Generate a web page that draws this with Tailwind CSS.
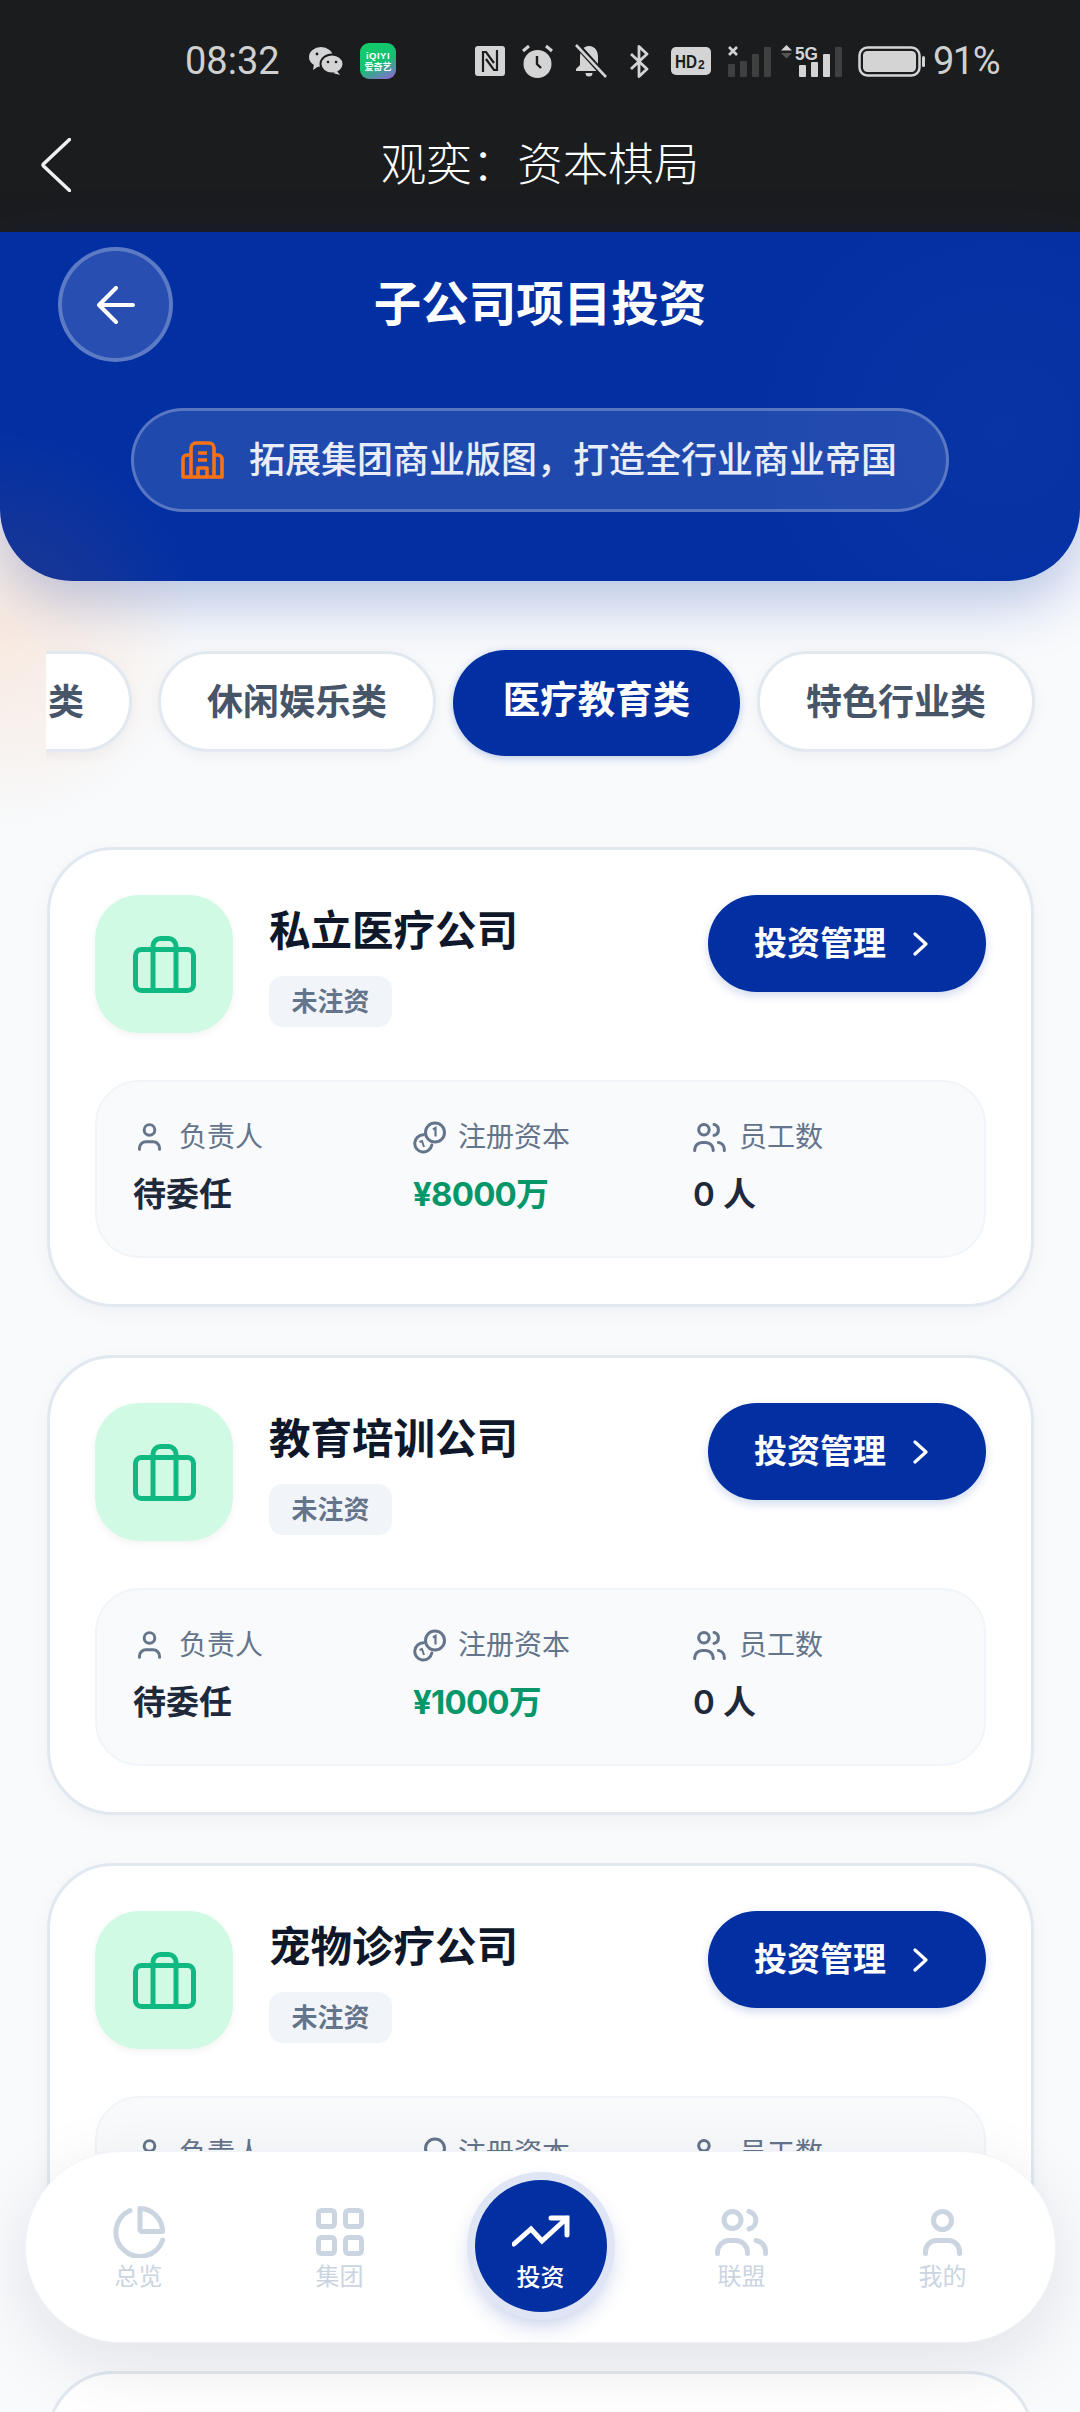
<!DOCTYPE html>
<html lang="zh-CN">
<head>
<meta charset="utf-8">
<title>子公司项目投资</title>
<script src="https://cdn.jsdelivr.net/npm/@tailwindcss/browser@4"></script>
</head>
<body class="m-0">
<div class="relative w-[1080px] h-[2412px] overflow-hidden bg-[#f8fafc] font-['Inter','Noto_Sans_CJK_SC',sans-serif]">

  <!-- system bars -->
  <div class="h-[232px] bg-[#1b1c1e] relative">
    <div class="h-[122px] flex items-center pl-[185px] text-[#d0d0d0]">
      <span class="w-[93px] text-[38px] leading-none font-['Roboto',sans-serif] font-normal">08:32</span>
      <svg class="ml-[31px]" width="34" height="28" viewBox="0 0 34 28"><ellipse cx="12" cy="10" rx="12" ry="10" fill="#d4d4d4"/><path d="M5 17l-1 6 6-4z" fill="#d4d4d4"/><ellipse cx="23" cy="17" rx="11.500" ry="9.500" fill="#d4d4d4" stroke="#1b1c1e" stroke-width="2"/><path d="M28 24l3 4-7-2z" fill="#d4d4d4"/><circle cx="8" cy="7" r="1.400" fill="#1b1c1e"/><circle cx="19" cy="15" r="1.300" fill="#1b1c1e"/><circle cx="27" cy="15" r="1.300" fill="#1b1c1e"/></svg>
      <div class="ml-[17px] w-[36px] h-[36px] rounded-[9px] bg-[linear-gradient(155deg,#10cf68_0%,#16bf72_55%,#9a5fe0_100%)] flex flex-col items-center justify-center text-white leading-none">
        <span class="text-[9.500px] font-bold leading-[11px] tracking-[0.5px] font-['Liberation_Sans',sans-serif]">iQIYI</span>
        <span class="text-[9px] font-bold leading-[11px]">爱奇艺</span>
      </div>
      <svg class="ml-[79px]" width="30" height="30" viewBox="0 0 30 30"><rect width="30" height="30" rx="3" fill="#d4d4d4"/><path d="M8 26V6h3l8 11M22 4v20h-3l-8-11" fill="none" stroke="#1b1c1e" stroke-width="2.200"/></svg>
      <svg class="ml-[17px]" width="31" height="34" viewBox="0 0 31 34"><path d="M1 7l6-5M24 2l6 5" stroke="#d4d4d4" stroke-width="3" fill="none"/><circle cx="15.500" cy="20" r="14" fill="#d4d4d4"/><path d="M15 12v8l4 4" stroke="#1b1c1e" stroke-width="2.400" fill="none"/></svg>
      <svg class="ml-[21px]" width="33" height="34" viewBox="0 0 33 34"><path d="M15 2c-6 0-9 5-9 11v8l-4 4v2h26v-2l-4-4v-8c0-6-3-11-9-11z" fill="#d4d4d4"/><path d="M11.500 29a3.500 3.500 0 0 0 7 0z" fill="#d4d4d4"/><path d="M2 0l30 33" stroke="#1b1c1e" stroke-width="6"/><path d="M2 1l30 32" stroke="#d4d4d4" stroke-width="2.600"/></svg>
      <svg class="ml-[22px]" width="21" height="33" viewBox="0 0 21 33"><path d="M2 9l16 15-8 7.500V1.500l8 7.500L2 24" fill="none" stroke="#d4d4d4" stroke-width="2.800" stroke-linejoin="round"/></svg>
      <svg class="ml-[21px]" width="40" height="28" viewBox="0 0 40 28"><rect width="40" height="28" rx="5" fill="#d4d4d4"/><text x="4" y="21" font-family="Liberation Sans" font-weight="700" font-size="19" fill="#1b1c1e" textLength="22" lengthAdjust="spacingAndGlyphs">HD</text><text x="27" y="22" font-family="Liberation Sans" font-weight="700" font-size="12" fill="#1b1c1e">2</text></svg>
      <svg class="ml-[17px]" width="43" height="31" viewBox="0 0 43 31"><path d="M1 1l8 8M9 1l-8 8" stroke="#d4d4d4" stroke-width="2.600"/><rect y="18" width="7" height="13" rx="1" fill="#3f4040"/><rect x="12" y="15" width="7" height="16" rx="1" fill="#3f4040"/><rect x="24" y="8" width="7" height="23" rx="1" fill="#3f4040"/><rect x="36" y="1" width="7" height="30" rx="1" fill="#3f4040"/></svg>
      <svg class="ml-[10px]" width="61" height="32" viewBox="0 0 61 32"><path d="M0 5.500L5.500 0 11 5.500z" fill="#d4d4d4"/><path d="M0 8h11l-5.500 5.500z" fill="#555"/><text x="14" y="15" font-family="Liberation Sans" font-weight="700" font-size="18" fill="#d4d4d4" textLength="23" lengthAdjust="spacingAndGlyphs">5G</text><rect x="18" y="20" width="7" height="12" rx="1" fill="#d4d4d4"/><rect x="30" y="17" width="7" height="15" rx="1" fill="#d4d4d4"/><rect x="42" y="9" width="7" height="23" rx="1" fill="#d4d4d4"/><rect x="54" y="2" width="7" height="30" rx="1" fill="#3f4040"/></svg>
      <svg class="ml-[16px]" width="67" height="31" viewBox="0 0 67 31"><rect x="1.500" y="1.500" width="60" height="28" rx="8" fill="none" stroke="#d4d4d4" stroke-width="2.500"/><rect x="5" y="5" width="53" height="21" rx="4.500" fill="#d4d4d4"/><rect x="64" y="10" width="3" height="11" rx="1.500" fill="#d4d4d4"/></svg>
      <span class="ml-[8px] text-[38px] leading-none tracking-[-1.5px] font-['Roboto',sans-serif] font-normal">91%</span>
    </div>
    <div class="relative h-[86px] flex items-center justify-center">
      <svg class="absolute left-[41px] top-[16px]" width="30" height="54" viewBox="0 0 30 54"><path d="M28.500 1.500L2.500 26q-1 1 0 2l26 24.500" fill="none" stroke="#f0f0f0" stroke-width="3.500" stroke-linecap="round"/></svg>
      <span class="text-[45.500px] leading-none font-light text-white">观奕：资本棋局</span>
    </div>
  </div>

  <!-- blue header -->
  <div class="relative h-[349px] bg-[#0230a3] rounded-b-[72px] shadow-[0_20px_60px_rgba(2,48,163,0.28)] overflow-hidden">
    <div class="absolute right-[-180px] top-[-60px] w-[520px] h-[520px] rounded-full bg-[radial-gradient(circle,rgba(255,255,255,0.025)_0%,rgba(255,255,255,0)_70%)]"></div>
    <div class="relative flex items-center justify-between px-[58px] pt-[15px]">
      <div class="w-[115px] h-[115px] rounded-full bg-white/15 border-[4px] border-white/25 flex items-center justify-center">
        <svg width="38" height="38" viewBox="0 0 38 38"><path d="M36 19H3M19 2L2 19l17 17" fill="none" stroke="#fff" stroke-width="4" stroke-linecap="round" stroke-linejoin="round"/></svg>
      </div>
      <h1 class="mb-[2px] text-[47.500px] leading-none font-bold text-white">子公司项目投资</h1>
      <div class="w-[115px] h-[115px]"></div>
    </div>
    <div class="relative mt-[46px] mx-auto w-[818px] h-[104px] rounded-full bg-white/12 border-[3px] border-white/25 flex items-center pl-[47px]">
      <svg width="43" height="38" viewBox="0 0 43 38"><path d="M10 36V7a5 5 0 0 1 5-5h13a5 5 0 0 1 5 5v29M10 14H6a4 4 0 0 0-4 4v18h39V18a4 4 0 0 0-4-4h-4M17 12h9M17 19h9M17 36v-9h9v9" fill="none" stroke="#f97316" stroke-width="3.600" stroke-linejoin="round"/></svg>
      <span class="ml-[25px] text-[36px] leading-none font-medium text-white/90 whitespace-nowrap">拓展集团商业版图，打造全行业商业帝国</span>
    </div>
  </div>
  <div class="absolute left-[-200px] top-[430px] w-[400px] h-[400px] rounded-full bg-[radial-gradient(circle,rgba(249,115,22,0.12)_0%,rgba(249,115,22,0.06)_40%,rgba(249,115,22,0)_70%)]"></div>

  <!-- category tabs -->
  <div class="relative mt-[49px] ml-[46px] h-[150px] pt-[20px] overflow-hidden flex items-start font-bold">
    <div class="shrink-0 ml-[-190px] mt-px w-[276px] h-[101px] pr-[45px] rounded-full bg-white border-[3px] border-[#e2e8f0] shadow-[0_4px_14px_rgba(15,23,42,0.05)] flex items-center justify-end text-[36px] leading-none text-[#475569]">类</div>
    <div class="shrink-0 ml-[26px] mt-px w-[278px] h-[101px] rounded-full bg-white border-[3px] border-[#e2e8f0] shadow-[0_4px_14px_rgba(15,23,42,0.05)] flex items-center justify-center text-[36px] leading-none text-[#475569]">休闲娱乐类</div>
    <div class="shrink-0 ml-[17px] w-[287px] h-[106px] pb-[6px] rounded-full bg-[#0230a3] shadow-[0_2px_8px_rgba(2,48,163,0.25)] flex items-center justify-center text-[37.500px] leading-none text-white">医疗教育类</div>
    <div class="shrink-0 ml-[17px] mt-px w-[278px] h-[101px] rounded-full bg-white border-[3px] border-[#e2e8f0] shadow-[0_4px_14px_rgba(15,23,42,0.05)] flex items-center justify-center text-[36px] leading-none text-[#475569]">特色行业类</div>
  </div>

  <!-- cards -->
  <div class="relative mt-[67px] ml-[47px] w-[987px] flex flex-col gap-[48px]">

    <div class="h-[460px] rounded-[66px] bg-white border-[3px] border-[#e2e8f0] shadow-[0_6px_20px_rgba(15,23,42,0.04)] pt-[45px] px-[45px]">
      <div class="flex items-start">
        <div class="w-[138px] h-[138px] rounded-[44px] bg-[#d1fae5] shadow-[0_3px_8px_rgba(15,23,42,0.05)] flex items-center justify-center">
          <svg width="63" height="57" viewBox="0 0 63 57"><rect x="2.500" y="13.500" width="58" height="41" rx="6" fill="none" stroke="#10b981" stroke-width="5"/><path d="M20 54V10a7.500 7.500 0 0 1 7.500-7.500h8A7.500 7.500 0 0 1 43 10v44" fill="none" stroke="#10b981" stroke-width="5"/></svg>
        </div>
        <div class="ml-[36px] flex-1">
          <div class="h-[72px] text-[41.500px] leading-[72px] font-bold text-[#0f172a]">私立医疗公司</div>
          <div class="mt-[9px] w-[123px] h-[51px] rounded-[14px] bg-[#f1f5f9] flex items-center justify-center text-[26px] leading-none font-bold text-[#64748b]">未注资</div>
        </div>
        <div class="w-[278px] h-[97px] rounded-full bg-[#0230a3] shadow-[0_4px_10px_rgba(2,48,163,0.18)] flex items-center pl-[46px] text-white">
          <span class="text-[33px] leading-none font-bold">投资管理</span>
          <svg class="ml-[27px]" width="15" height="24" viewBox="0 0 15 24"><path d="M2 2l11 10L2 22" fill="none" stroke="#fff" stroke-width="3.200" stroke-linecap="round" stroke-linejoin="round"/></svg>
        </div>
      </div>
      <div class="mt-[47px] h-[178px] rounded-[44px] bg-[#f8fafc] border-[2px] border-[#f1f5f9] pl-[36px] pt-[35px] grid grid-cols-[280px_280px_1fr] content-start">
        <div>
          <div class="h-[40px] flex items-center text-[28px] leading-none text-[#64748b]">
            <span class="w-[33px] flex justify-center"><svg width="23" height="28" viewBox="0 0 39 47"><circle cx="19.500" cy="11.500" r="9" fill="none" stroke="#64748b" stroke-width="5"/><path d="M2.500 44.500v-2a11 11 0 0 1 11-11h12a11 11 0 0 1 11 11v2" fill="none" stroke="#64748b" stroke-width="5" stroke-linecap="round"/></svg></span>
            <span class="ml-[13px]">负责人</span>
          </div>
          <div class="mt-[13px] h-[48px] text-[33px] leading-[48px] font-bold text-[#1e293b]">待委任</div>
        </div>
        <div>
          <div class="h-[40px] flex items-center text-[28px] leading-none text-[#64748b]">
            <svg width="33" height="33" viewBox="0 0 33 33"><circle cx="22" cy="11.500" r="9.500" fill="none" stroke="#64748b" stroke-width="3"/><path d="M20 8.500l2.500-1.500v8.500" fill="none" stroke="#64748b" stroke-width="2.200"/><path d="M10.500 13.800A8.600 8.600 0 1 0 18.800 24" fill="none" stroke="#64748b" stroke-width="3" stroke-linecap="round"/><path d="M6.500 21l2.500-1 2 6" fill="none" stroke="#64748b" stroke-width="2"/></svg>
            <span class="ml-[12px]">注册资本</span>
          </div>
          <div class="mt-[13px] h-[48px] text-[33px] leading-[48px] font-bold tracking-[-0.8px] text-[#059669]">¥8000万</div>
        </div>
        <div>
          <div class="h-[40px] flex items-center text-[28px] leading-none text-[#64748b]">
            <svg width="33" height="29" viewBox="0 0 53 47"><circle cx="17.500" cy="11" r="8.500" fill="none" stroke="#64748b" stroke-width="5"/><path d="M34 2.500a9 9 0 0 1 0 17.500" fill="none" stroke="#64748b" stroke-width="5" stroke-linecap="round"/><path d="M2.500 44.500v-1a12 12 0 0 1 12-12h6a12 12 0 0 1 12 12v1M41 31.500a11 11 0 0 1 9.500 11v2" fill="none" stroke="#64748b" stroke-width="5" stroke-linecap="round"/></svg>
            <span class="ml-[13px]">员工数</span>
          </div>
          <div class="mt-[13px] h-[48px] text-[33px] leading-[48px] font-semibold text-[#1e293b]">0 人</div>
        </div>
      </div>
    </div>

    <div class="h-[460px] rounded-[66px] bg-white border-[3px] border-[#e2e8f0] shadow-[0_6px_20px_rgba(15,23,42,0.04)] pt-[45px] px-[45px]">
      <div class="flex items-start">
        <div class="w-[138px] h-[138px] rounded-[44px] bg-[#d1fae5] shadow-[0_3px_8px_rgba(15,23,42,0.05)] flex items-center justify-center">
          <svg width="63" height="57" viewBox="0 0 63 57"><rect x="2.500" y="13.500" width="58" height="41" rx="6" fill="none" stroke="#10b981" stroke-width="5"/><path d="M20 54V10a7.500 7.500 0 0 1 7.500-7.500h8A7.500 7.500 0 0 1 43 10v44" fill="none" stroke="#10b981" stroke-width="5"/></svg>
        </div>
        <div class="ml-[36px] flex-1">
          <div class="h-[72px] text-[41.500px] leading-[72px] font-bold text-[#0f172a]">教育培训公司</div>
          <div class="mt-[9px] w-[123px] h-[51px] rounded-[14px] bg-[#f1f5f9] flex items-center justify-center text-[26px] leading-none font-bold text-[#64748b]">未注资</div>
        </div>
        <div class="w-[278px] h-[97px] rounded-full bg-[#0230a3] shadow-[0_4px_10px_rgba(2,48,163,0.18)] flex items-center pl-[46px] text-white">
          <span class="text-[33px] leading-none font-bold">投资管理</span>
          <svg class="ml-[27px]" width="15" height="24" viewBox="0 0 15 24"><path d="M2 2l11 10L2 22" fill="none" stroke="#fff" stroke-width="3.200" stroke-linecap="round" stroke-linejoin="round"/></svg>
        </div>
      </div>
      <div class="mt-[47px] h-[178px] rounded-[44px] bg-[#f8fafc] border-[2px] border-[#f1f5f9] pl-[36px] pt-[35px] grid grid-cols-[280px_280px_1fr] content-start">
        <div>
          <div class="h-[40px] flex items-center text-[28px] leading-none text-[#64748b]">
            <span class="w-[33px] flex justify-center"><svg width="23" height="28" viewBox="0 0 39 47"><circle cx="19.500" cy="11.500" r="9" fill="none" stroke="#64748b" stroke-width="5"/><path d="M2.500 44.500v-2a11 11 0 0 1 11-11h12a11 11 0 0 1 11 11v2" fill="none" stroke="#64748b" stroke-width="5" stroke-linecap="round"/></svg></span>
            <span class="ml-[13px]">负责人</span>
          </div>
          <div class="mt-[13px] h-[48px] text-[33px] leading-[48px] font-bold text-[#1e293b]">待委任</div>
        </div>
        <div>
          <div class="h-[40px] flex items-center text-[28px] leading-none text-[#64748b]">
            <svg width="33" height="33" viewBox="0 0 33 33"><circle cx="22" cy="11.500" r="9.500" fill="none" stroke="#64748b" stroke-width="3"/><path d="M20 8.500l2.500-1.500v8.500" fill="none" stroke="#64748b" stroke-width="2.200"/><path d="M10.500 13.800A8.600 8.600 0 1 0 18.800 24" fill="none" stroke="#64748b" stroke-width="3" stroke-linecap="round"/><path d="M6.500 21l2.500-1 2 6" fill="none" stroke="#64748b" stroke-width="2"/></svg>
            <span class="ml-[12px]">注册资本</span>
          </div>
          <div class="mt-[13px] h-[48px] text-[33px] leading-[48px] font-bold tracking-[-0.8px] text-[#059669]">¥1000万</div>
        </div>
        <div>
          <div class="h-[40px] flex items-center text-[28px] leading-none text-[#64748b]">
            <svg width="33" height="29" viewBox="0 0 53 47"><circle cx="17.500" cy="11" r="8.500" fill="none" stroke="#64748b" stroke-width="5"/><path d="M34 2.500a9 9 0 0 1 0 17.500" fill="none" stroke="#64748b" stroke-width="5" stroke-linecap="round"/><path d="M2.500 44.500v-1a12 12 0 0 1 12-12h6a12 12 0 0 1 12 12v1M41 31.500a11 11 0 0 1 9.500 11v2" fill="none" stroke="#64748b" stroke-width="5" stroke-linecap="round"/></svg>
            <span class="ml-[13px]">员工数</span>
          </div>
          <div class="mt-[13px] h-[48px] text-[33px] leading-[48px] font-semibold text-[#1e293b]">0 人</div>
        </div>
      </div>
    </div>

    <div class="h-[460px] rounded-[66px] bg-white border-[3px] border-[#e2e8f0] shadow-[0_6px_20px_rgba(15,23,42,0.04)] pt-[45px] px-[45px]">
      <div class="flex items-start">
        <div class="w-[138px] h-[138px] rounded-[44px] bg-[#d1fae5] shadow-[0_3px_8px_rgba(15,23,42,0.05)] flex items-center justify-center">
          <svg width="63" height="57" viewBox="0 0 63 57"><rect x="2.500" y="13.500" width="58" height="41" rx="6" fill="none" stroke="#10b981" stroke-width="5"/><path d="M20 54V10a7.500 7.500 0 0 1 7.500-7.500h8A7.500 7.500 0 0 1 43 10v44" fill="none" stroke="#10b981" stroke-width="5"/></svg>
        </div>
        <div class="ml-[36px] flex-1">
          <div class="h-[72px] text-[41.500px] leading-[72px] font-bold text-[#0f172a]">宠物诊疗公司</div>
          <div class="mt-[9px] w-[123px] h-[51px] rounded-[14px] bg-[#f1f5f9] flex items-center justify-center text-[26px] leading-none font-bold text-[#64748b]">未注资</div>
        </div>
        <div class="w-[278px] h-[97px] rounded-full bg-[#0230a3] shadow-[0_4px_10px_rgba(2,48,163,0.18)] flex items-center pl-[46px] text-white">
          <span class="text-[33px] leading-none font-bold">投资管理</span>
          <svg class="ml-[27px]" width="15" height="24" viewBox="0 0 15 24"><path d="M2 2l11 10L2 22" fill="none" stroke="#fff" stroke-width="3.200" stroke-linecap="round" stroke-linejoin="round"/></svg>
        </div>
      </div>
      <div class="mt-[47px] h-[178px] rounded-[44px] bg-[#f8fafc] border-[2px] border-[#f1f5f9] pl-[36px] pt-[35px] grid grid-cols-[280px_280px_1fr] content-start">
        <div class="h-[40px] flex items-center text-[28px] leading-none text-[#64748b]">
          <span class="w-[33px] flex justify-center"><svg width="23" height="28" viewBox="0 0 39 47"><circle cx="19.500" cy="11.500" r="9" fill="none" stroke="#64748b" stroke-width="5"/></svg></span>
          <span class="ml-[13px]">负责人</span>
        </div>
        <div class="h-[40px] flex items-center text-[28px] leading-none text-[#64748b]">
          <svg width="33" height="33" viewBox="0 0 33 33"><circle cx="22" cy="11.500" r="9.500" fill="none" stroke="#64748b" stroke-width="3"/></svg>
          <span class="ml-[12px]">注册资本</span>
        </div>
        <div class="h-[40px] flex items-center text-[28px] leading-none text-[#64748b]">
          <svg width="33" height="29" viewBox="0 0 53 47"><circle cx="17.500" cy="11" r="8.500" fill="none" stroke="#64748b" stroke-width="5"/></svg>
          <span class="ml-[13px]">员工数</span>
        </div>
      </div>
    </div>

    <div class="h-[460px] rounded-[66px] bg-white border-[3px] border-[#e2e8f0]"></div>
  </div>

  <!-- floating bottom navigation -->
  <nav class="absolute left-[25px] top-[2151px] w-[1031px] h-[192px] rounded-[96px] bg-white border border-[#f1f5f9] shadow-[0_20px_70px_rgba(15,23,42,0.10)] px-[12px] pt-[54px] grid grid-cols-5 items-start text-[24px] leading-[30px] text-[#cbd5e1]">
    <div class="flex flex-col items-center">
      <svg width="52" height="52" viewBox="0 0 52 52"><path d="M17 4.500A24 24 0 1 0 49.700 34" fill="none" stroke="#cbd5e1" stroke-width="5" stroke-linecap="round"/><path d="M27 2.500a23 23 0 0 1 22.500 23H29a2 2 0 0 1-2-2z" fill="none" stroke="#cbd5e1" stroke-width="5" stroke-linejoin="round"/></svg>
      <span class="mt-[4px]">总览</span>
    </div>
    <div class="flex flex-col items-center">
      <div class="h-[52px] flex items-center"><svg width="48" height="48" viewBox="0 0 48 48"><g fill="none" stroke="#cbd5e1" stroke-width="5"><rect x="2.500" y="2.500" width="16" height="16" rx="3"/><rect x="29.500" y="2.500" width="16" height="16" rx="3"/><rect x="2.500" y="29.500" width="16" height="16" rx="3"/><rect x="29.500" y="29.500" width="16" height="16" rx="3"/></g></svg></div>
      <span class="mt-[4px]">集团</span>
    </div>
    <div class="flex justify-center">
      <div class="mt-[-26px] w-[132px] h-[132px] rounded-full bg-[#0230a3] shadow-[0_0_0_8px_#dfe5f4,0_10px_24px_rgba(2,48,163,0.3)] flex flex-col items-center pt-[35px] text-white font-medium">
        <svg width="58" height="32" viewBox="0 0 58 32"><path d="M2 29l17-15 11 12L55 3M39 3h16v17" fill="none" stroke="#fff" stroke-width="5" stroke-linecap="round" stroke-linejoin="miter"/></svg>
        <span class="mt-[16px]">投资</span>
      </div>
    </div>
    <div class="flex flex-col items-center">
      <div class="h-[52px] flex items-center"><svg width="53" height="47" viewBox="0 0 53 47"><circle cx="17.500" cy="11" r="8.500" fill="none" stroke="#cbd5e1" stroke-width="5"/><path d="M34 2.500a9 9 0 0 1 0 17.500" fill="none" stroke="#cbd5e1" stroke-width="5" stroke-linecap="round"/><path d="M2.500 44.500v-1a12 12 0 0 1 12-12h6a12 12 0 0 1 12 12v1M41 31.500a11 11 0 0 1 9.500 11v2" fill="none" stroke="#cbd5e1" stroke-width="5" stroke-linecap="round"/></svg></div>
      <span class="mt-[4px]">联盟</span>
    </div>
    <div class="flex flex-col items-center">
      <div class="h-[52px] flex items-center"><svg width="39" height="47" viewBox="0 0 39 47"><circle cx="19.500" cy="11.500" r="9" fill="none" stroke="#cbd5e1" stroke-width="5"/><path d="M2.500 44.500v-2a11 11 0 0 1 11-11h12a11 11 0 0 1 11 11v2" fill="none" stroke="#cbd5e1" stroke-width="5" stroke-linecap="round"/></svg></div>
      <span class="mt-[4px]">我的</span>
    </div>
  </nav>
</div>
</body>
</html>
